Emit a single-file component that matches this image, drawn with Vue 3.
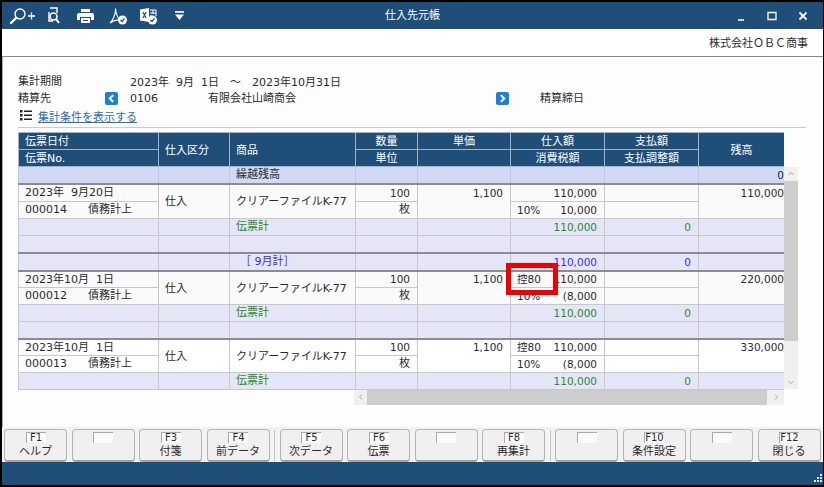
<template>
  <div class="window">
    <header class="titlebar">
      <div class="tools">
        <svg class="ic" style="width: 27px" viewBox="0 0 27 18" fill="none" stroke="#fff">
          <circle cx="11" cy="7" r="5" stroke-width="1.4" />
          <path d="M7 11 2 16" stroke-width="2.4" stroke-linecap="round" />
          <path d="M19 9h7M22.500 5.500v7" stroke-width="1.3" />
        </svg>
        <svg class="ic doc" viewBox="0 0 14 18" fill="none" stroke="#fff">
          <path d="M4 1h7v5M3 5v9h4" stroke-width="1.4" />
          <circle cx="7.500" cy="9.500" r="3.500" stroke-width="1.6" />
          <path d="m10 12 3 4" stroke-width="2" />
        </svg>
        <svg class="ic printer" viewBox="0 0 17 16" fill="#fff">
          <path d="M4 1h9v3H4z" />
          <path d="M2 5h13q2 0 2 2v5h-3V9H3v3H0V7q0-2 2-2z" />
          <path d="M4 10h9v5H4z" />
          <path d="M6 12h5v1H6z" fill="#1f4e79" />
        </svg>
        <svg class="ic pdf" viewBox="0 0 18 18" fill="none" stroke="#fff">
          <path d="M1 16C4 13 7 7 6.500 1.500 7 7 9 11 11 13 8 12.500 4 14 1 16z" stroke-width="1.100" />
          <circle cx="13.500" cy="13" r="4.500" fill="#fff" stroke="none" />
          <path d="m11.500 13 1.500 1.500 2.500-3" stroke="#1f4e79" stroke-width="1.200" />
        </svg>
        <svg class="ic xls" viewBox="0 0 17 18" fill="none">
          <path d="M0 2.500 9 1v14L0 13.500z" fill="#fff" />
          <path d="m3 5 3 6M6 5l-3 6" stroke="#1f4e79" stroke-width="1.200" />
          <path d="M10 3h6v6M10 6h6M10 9h2M13 3v4" stroke="#fff" />
          <circle cx="12.500" cy="13" r="4.500" fill="#fff" />
          <path d="m10.500 13 1.500 1.500 2.500-3" stroke="#1f4e79" stroke-width="1.200" />
        </svg>
        <svg class="ic drop" viewBox="0 0 8 8" fill="#fff">
          <path d="M0 0h8v1.500H0zM0 3h8L4 8z" />
        </svg>
      </div>
      <span class="title">仕入先元帳</span>
      <div class="controls">
        <svg viewBox="0 0 10 10" fill="none" stroke="#fff" stroke-width="1.500"><path d="M2 9h6" /></svg>
        <svg viewBox="0 0 10 10" fill="none" stroke="#fff" stroke-width="1.300"><path d="M1 1.500h8v7H1z" /></svg>
        <svg viewBox="0 0 10 10" fill="none" stroke="#fff" stroke-width="1.800"><path d="m1.500 1.500 7 7M8.500 1.500l-7 7" /></svg>
      </div>
    </header>

    <div class="company">株式会社ＯＢＣ商事</div>

    <main class="content">
      <section class="info">
        <span>集計期間</span>
        <span></span>
        <span class="period"><span>2023年&nbsp;&nbsp;9月&nbsp;&nbsp;1日</span><span>～</span><span>2023年10月31日</span></span>
        <span>精算先</span>
        <button class="nav"><svg viewBox="0 0 8 8" fill="none" stroke="#fff" stroke-width="1.800"><path d="M5.500 1 2.500 4l3 3" /></svg></button>
        <span class="partner">
          <span class="code">0106</span>
          <span class="partner-name">有限会社山崎商会</span>
          <button class="nav"><svg viewBox="0 0 8 8" fill="none" stroke="#fff" stroke-width="1.800"><path d="m2.500 1 3 3-3 3" /></svg></button>
          <span class="closing">精算締日</span>
        </span>
      </section>
      <div class="show-conditions">
        <svg viewBox="0 0 12 11" fill="#1b2230"><path d="M0 0h2.500v2.500H0zM4 .5h8V2H4zM0 4h2.500v2.500H0zM4 4.500h8V6H4zM0 8h2.500v2.500H0zM4 8.500h8V10H4z" /></svg>
        <a>集計条件を表示する</a>
      </div>
      <div class="rule"></div>

      <div class="ledger">
        <div class="table-clip">
          <table>
            <colgroup>
              <col v-for="w in colWidths" :key="w.id" :style="{ width: w.px + 'px' }" />
            </colgroup>
            <thead>
              <tr>
                <th class="left">伝票日付</th>
                <th class="left" rowspan="2">仕入区分</th>
                <th class="left" rowspan="2">商品</th>
                <th>数量</th>
                <th>単価</th>
                <th>仕入額</th>
                <th class="sub">支払額</th>
                <th rowspan="2">残高</th>
              </tr>
              <tr>
                <th class="left">伝票No.</th>
                <th>単位</th>
                <th></th>
                <th>消費税額</th>
                <th class="sub">支払調整額</th>
              </tr>
            </thead>
            <tbody>
              <tr class="carry thick-bottom">
                <td></td><td></td><td class="pad">繰越残高</td><td></td><td></td><td></td><td></td>
                <td class="num bal">0</td>
              </tr>
              <template v-for="(b, i) in blocks" :key="b.no">
                <tr :class="['thick', b.plain ? 'plain' : 'soft', { tight: i > 0 }]">
                  <td class="pad">{{ b.date }}</td>
                  <td class="pad" rowspan="2">仕入</td>
                  <td class="pad" rowspan="2">クリアーファイルK-77</td>
                  <td class="num right">100</td>
                  <td class="num right top" rowspan="2">1,100</td>
                  <td class="num"><div class="amount"><span>{{ b.topTag }}</span><span>110,000</span></div></td>
                  <td></td>
                  <td class="num bal top" rowspan="2">{{ b.balance }}</td>
                </tr>
                <tr :class="b.plain ? 'plain' : 'soft'">
                  <td class="pad"><span class="slip-no">{{ b.no }}</span>債務計上</td>
                  <td class="right">枚</td>
                  <td class="num"><div class="amount"><span>10%</span><span>{{ b.tax }}</span></div></td>
                  <td></td>
                </tr>
                <tr class="total">
                  <td></td><td></td><td class="pad green">伝票計</td><td></td><td></td>
                  <td class="num right green">110,000</td>
                  <td class="num right green">0</td>
                  <td></td>
                </tr>
                <tr v-if="i < blocks.length - 1" class="total">
                  <td v-for="n in 8" :key="n"></td>
                </tr>
                <tr v-if="i === 0" class="total thick">
                  <td></td><td></td><td class="pad blue month">［ 9月計］</td><td></td><td></td>
                  <td class="num right blue">110,000</td>
                  <td class="num right blue">0</td>
                  <td></td>
                </tr>
              </template>
            </tbody>
          </table>
          <div class="hscroll">
            <span class="arrow"><svg viewBox="0 0 8 8" fill="none" stroke="#a6a6a6"><path d="M5 1.500 2.500 4 5 6.500" /></svg></span>
            <span class="h-thumb"></span>
            <span class="arrow wide"><svg viewBox="0 0 8 8" fill="none" stroke="#a6a6a6"><path d="M3 1.500 5.500 4 3 6.500" /></svg></span>
          </div>
        </div>
        <div class="vscroll">
          <span class="arrow"><svg viewBox="0 0 8 8" fill="none" stroke="#a6a6a6"><path d="M1.500 5 4 2.500 6.500 5" /></svg></span>
          <span class="v-thumb"></span>
          <span class="v-rest"></span>
          <span class="arrow"><svg viewBox="0 0 8 8" fill="none" stroke="#a6a6a6"><path d="M1.500 3 4 5.500 6.500 3" /></svg></span>
        </div>
        <div class="marker"></div>
      </div>
    </main>

    <div class="fkeys">
      <template v-for="k in fkeys" :key="k.id">
        <i v-if="k.sep" class="sep"></i>
        <button v-else class="fkey">
          <span class="cap">{{ k.key }}</span>
          <span class="label">{{ k.label }}</span>
        </button>
      </template>
    </div>

    <footer class="statusbar">
      <svg viewBox="0 0 10 10" fill="#dfe6ee"><path d="M8 0h2v2H8zM8 3h2v2H8zM5 3h2v2H5zM8 6h2v2H8zM5 6h2v2H5zM2 6h2v2H2z" /></svg>
    </footer>
  </div>
</template>

<script setup>
const colWidths = [
  { id: "date", px: 140 },
  { id: "kubun", px: 71 },
  { id: "item", px: 126 },
  { id: "qty", px: 62 },
  { id: "price", px: 93 },
  { id: "amount", px: 94 },
  { id: "pay", px: 94 },
  { id: "bal", px: 86 },
];

const blocks = [
  { date: "2023年  9月20日", no: "000014", topTag: "", tax: "10,000", balance: "110,000", plain: false },
  { date: "2023年10月  1日", no: "000012", topTag: "控80", tax: "(8,000", balance: "220,000", plain: false },
  { date: "2023年10月  1日", no: "000013", topTag: "控80", tax: "(8,000", balance: "330,000", plain: true },
];

const fkeys = [
  { id: 1, key: "F1", label: "ヘルプ" },
  { id: 2, key: "", label: "" },
  { id: 3, key: "F3", label: "付箋" },
  { id: 4, key: "F4", label: "前データ" },
  { id: "s1", sep: true },
  { id: 5, key: "F5", label: "次データ" },
  { id: 6, key: "F6", label: "伝票" },
  { id: 7, key: "", label: "" },
  { id: 8, key: "F8", label: "再集計" },
  { id: "s2", sep: true },
  { id: 9, key: "", label: "" },
  { id: 10, key: "F10", label: "条件設定" },
  { id: 11, key: "", label: "" },
  { id: 12, key: "F12", label: "閉じる" },
];
</script>

<style>
html,
body {
  margin: 0;
  background: #000;
}
</style>

<style scoped>
.window {
  box-sizing: border-box;
  width: 824px;
  height: 487px;
  padding: 2px 1px 2px 2px;
  display: flex;
  flex-direction: column;
  background: #000;
  font-family: "DejaVu Sans", "Noto Sans CJK JP", sans-serif;
  font-size: 11px;
  color: #2b2b2b;
}

.titlebar {
  height: 27px;
  flex: none;
  display: flex;
  align-items: center;
  justify-content: space-between;
  position: relative;
  background: #1f4e79;
  color: #fff;
}

.tools {
  display: flex;
  align-items: center;
  padding-left: 7px;
}

.ic {
  display: block;
  height: 18px;
  width: 18px;
}

.ic.doc {
  width: 14px;
  margin-left: 10px;
}

.ic.printer {
  width: 17px;
  height: 16px;
  margin-left: 17px;
}

.ic.pdf {
  margin-left: 15px;
}

.ic.xls {
  width: 17px;
  margin-left: 13px;
}

.ic.drop {
  width: 9px;
  height: 9px;
  margin-left: 18px;
}

.title {
  position: absolute;
  left: 383px;
  top: 7px;
  font-size: 11px;
  line-height: 14px;
}

.controls {
  display: flex;
  gap: 21px;
  padding-right: 15px;
}

.controls svg {
  width: 10px;
  height: 10px;
}

.company {
  flex: none;
  height: 27px;
  box-sizing: border-box;
  padding: 8px 15px 0 0;
  line-height: 14px;
  text-align: right;
  background: #fff;
}

.content {
  flex: 1;
  box-sizing: border-box;
  padding: 16px 17px 0 15px;
  border-top: 1px solid #888;
  border-left: 1px solid #aaa;
  background: #fdfdfd;
}

.info {
  display: grid;
  grid-template-columns: 87px 25px 1fr;
  grid-auto-rows: 17px;
  align-items: center;
  line-height: 17px;
}

.info button {
  margin: 0;
}

.period {
  display: flex;
  gap: 11px;
  padding-top: 2px;
  white-space: pre;
}

.partner {
  display: flex;
  align-items: center;
  white-space: pre;
}

.code {
  width: 78px;
}

.partner-name {
  width: 288px;
}

.closing {
  margin-left: 31px;
}

.nav {
  width: 13px;
  height: 13px;
  padding: 2px;
  border: none;
  border-radius: 2px;
  background: #1d7fd8;
  display: block;
}

.nav svg {
  display: block;
  width: 9px;
  height: 9px;
}

.show-conditions {
  height: 17px;
  display: flex;
  align-items: center;
  padding-left: 2px;
}

.show-conditions svg {
  width: 12px;
  height: 11px;
  margin-right: 6px;
}

.show-conditions a {
  color: #2f6ea8;
  text-decoration: underline;
}

.rule {
  height: 1px;
  margin-top: 3px;
  background: #ccc;
}

.ledger {
  position: relative;
  display: flex;
  margin-top: 4px;
}

.table-clip {
  width: 766px;
  overflow: hidden;
}

table {
  table-layout: fixed;
  width: 766px;
  border-collapse: collapse;
}

th,
td {
  height: 16px;
  padding: 0;
  line-height: 16px;
  border: 1px solid #c8c8c8;
  white-space: pre;
  overflow: hidden;
}

th {
  box-sizing: border-box;
  height: 17px;
  padding-top: 1px;
  line-height: 15px;
  background: #1f4e79;
  color: #fff;
  font-weight: normal;
  text-align: center;
  border-color: #a9b4bf;
}

th.left {
  text-align: left;
  padding-left: 6px;
}

.carry td {
  background: #d0d9f5;
}

.total td {
  background: #e4e6f8;
}

.soft td {
  background: #fafafa;
}

.plain td {
  background: #fff;
}

tr.thick td {
  border-top: 2px solid #8c8c8c;
}

tr.tight td {
  height: 15px;
  line-height: 15px;
}

.carry.thick-bottom td {
  border-top: 1px solid #a9b4bf;
  border-bottom: 2px solid #8c8c8c;
}

.pad {
  padding-left: 6px;
}

.month {
  padding-left: 10px;
}

.num {
  font-size: 10.5px;
}

.right {
  text-align: right;
  padding-right: 7px;
}

.top {
  vertical-align: top;
}

.bal {
  text-align: right;
}

.amount {
  display: flex;
  justify-content: space-between;
  padding: 0 7px 0 6px;
}

.slip-no {
  display: inline-block;
  width: 63px;
}

.green {
  color: #2a8a2a;
}

.blue {
  color: #3434e0;
}

.hscroll {
  margin-left: 336px;
  height: 15px;
  display: flex;
  background: #f0f0f0;
}

.arrow {
  flex: none;
  width: 13px;
  height: 14px;
  display: flex;
  align-items: center;
  justify-content: center;
  background: #f0f0f0;
}

.arrow.wide {
  width: 17px;
}

.arrow svg {
  width: 8px;
  height: 8px;
}

.h-thumb {
  flex: 1;
  background: #cdcdcd;
}

.vscroll {
  width: 14px;
  margin-top: 35px;
  height: 222px;
  display: flex;
  flex-direction: column;
  background: #f0f0f0;
}

.v-thumb {
  height: 160px;
  background: #cdcdcd;
}

.v-rest {
  flex: 1;
}

.marker {
  position: absolute;
  left: 488px;
  top: 131px;
  width: 42px;
  height: 22px;
  border: 5px solid #f00000;
}

.fkeys {
  flex: none;
  height: 35px;
  box-sizing: border-box;
  padding: 2px 2px 0;
  display: flex;
  background: #f3f3f3;
  gap: 4.5px;
}

.fkey {
  flex: none;
  width: 63px;
  height: 33px;
  padding: 2px 0 0;
  display: flex;
  flex-direction: column;
  align-items: center;
  border: 1px solid #b4b4b4;
  border-bottom: 2px solid #a2a2a2;
  border-radius: 4px;
  background: #f0f0f0;
  font: inherit;
  color: #2b2b2b;
}

.cap {
  box-sizing: border-box;
  width: 20px;
  height: 11px;
  line-height: 10px;
  font-size: 10px;
  text-align: center;
  background: #fafafa;
  border-top: 1px solid #aaa;
  border-left: 1px solid #aaa;
}

.label {
  line-height: 16px;
  margin-top: 1px;
}

.sep {
  flex: none;
  width: 1px;
  height: 31px;
  margin-top: 1px;
  background: #c4c4c4;
}

.statusbar {
  flex: none;
  height: 23px;
  display: flex;
  justify-content: flex-end;
  align-items: flex-end;
  background: #1f4e79;
}

.statusbar svg {
  width: 10px;
  height: 10px;
  margin: 0 1px 1px 0;
}
</style>
